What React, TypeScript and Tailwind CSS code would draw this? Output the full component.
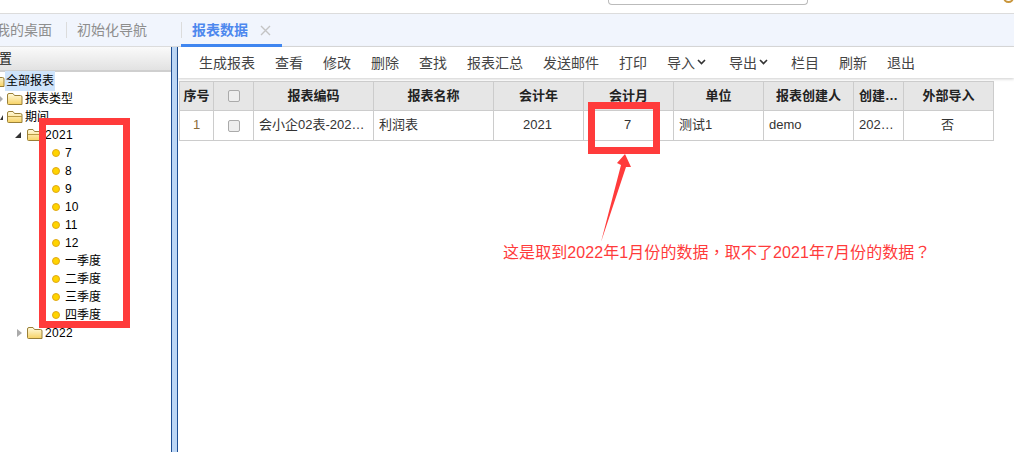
const months = ['7', '8', '9', '10', '11', '12', '一季度', '二季度', '三季度', '四季度'];

const columns = [
  { title: '序号', width: 'w-[34px]', value: '1', cell: 'text-center text-[#8a6d3b]' },
  { title: '', width: 'w-[40px]', value: '', cell: 'text-center', check: true },
  { title: '报表编码', width: 'w-[120px]', value: '会小企02表-202…', cell: 'pl-[5px] text-[#333]' },
  { title: '报表名称', width: 'w-[120px]', value: '利润表', cell: 'pl-[5px] text-[#333]' },
  { title: '会计年', width: 'w-[90px]', value: '2021', cell: 'pr-[2px] text-center text-[#333]' },
  { title: '会计月', width: 'w-[90px]', value: '7', cell: 'pr-[2px] text-center text-[#333]' },
  { title: '单位', width: 'w-[90px]', value: '测试1', cell: 'pl-[5px] text-[#333]' },
  { title: '报表创建人', width: 'w-[90px]', value: 'demo', cell: 'pl-[5px] text-[#333]' },
  { title: '创建…', width: 'w-[50px]', value: '202…', cell: 'pl-[5px] text-[#333]' },
  { title: '外部导入', width: 'w-[90px]', value: '否', cell: 'pr-[2px] text-center text-[#333]' },
];

const actions = [
  { label: '生成报表' },
  { label: '查看' },
  { label: '修改' },
  { label: '删除' },
  { label: '查找' },
  { label: '报表汇总' },
  { label: '发送邮件' },
  { label: '打印' },
  { label: '导入', caret: true },
  { label: '导出', caret: true },
  { label: '栏目' },
  { label: '刷新' },
  { label: '退出' },
];

function Folder({ open = false }: { open?: boolean }) {
  return (
    <svg width="16" height="14" viewBox="0 0 16 14" className="shrink-0">
      <defs>
        <linearGradient id="folderFill" x1="0" y1="0" x2="0" y2="1">
          <stop offset="0" stopColor="#fffbe0" />
          <stop offset="1" stopColor="#f7d264" />
        </linearGradient>
      </defs>
      <path d="M0.5 3 Q0.5 1.5 2 1.5 H6 L7.5 3.5 H13.5 Q15 3.5 15 5 V12.5 H1.5 Q0.5 12.5 0.5 11.5 Z" fill="url(#folderFill)" stroke="#9a8038" />
      {open && <path d="M1 6.5 H15" stroke="#b89a45" fill="none" />}
    </svg>
  );
}

function Dot() {
  return <span className="h-[8px] w-[8px] shrink-0 rounded-full border border-[#e0a818] bg-[#ffd400]" />;
}

function TreeLabel({ text, className = '' }: { text: string; className?: string }) {
  return <span className={`text-[12px] leading-[18px] text-black ${className}`}>{text}</span>;
}

function Caret() {
  return (
    <svg width="9" height="6" viewBox="0 0 9 6" className="mr-[3px] mb-[2px] ml-[2px]">
      <path d="M1 1 L4.5 4.5 L8 1" fill="none" stroke="#333" strokeWidth="1.6" />
    </svg>
  );
}

function Checkbox() {
  return <span className="inline-block h-[12px] w-[12px] rounded-[2px] border border-[#aaa] bg-[#eee] align-middle" />;
}

export default function App() {
  return (
    <div className="relative h-[452px] w-[1014px] overflow-hidden bg-white font-['Liberation_Sans','Noto_Sans_CJK_SC',sans-serif] text-[13px]">
      {/* top strip */}
      <div className="flex h-[14px] border-b border-[#dcdcdc] bg-white">
        <div className="ml-[608px] h-[5px] w-[200px] rounded-b-[4px] border border-t-0 border-[#bbb]" />
        <div className="mt-[-8px] ml-auto h-[11px] w-[11px] rounded-full border-2 border-[#c9963c]" />
      </div>

      {/* tabs */}
      <div className="flex h-[33px] items-center border-b border-[#dcdcdc] bg-[#f1f5fd]">
        <div className="ml-[-13px] flex h-[20px] w-[79px] items-center justify-end pr-[14px] text-[14px] whitespace-nowrap text-[#8e8e8e]">
          我的桌面
        </div>
        <div className="h-[16px] w-px bg-[#dcdcdc]" />
        <div className="w-[114px] pl-[10px] text-[14px] whitespace-nowrap text-[#8e8e8e]">初始化导航</div>
        <div className="h-[16px] w-px bg-[#dcdcdc]" />
        <div className="relative flex h-[33px] w-[100px] items-center pl-[10px] text-[14px] font-bold whitespace-nowrap text-[#4d88ee]">
          报表数据
          <svg width="11" height="11" viewBox="0 0 11 11" className="ml-[12px]">
            <path d="M1 1 L10 10 M10 1 L1 10" stroke="#c4c4c4" strokeWidth="1.4" />
          </svg>
          <span className="absolute right-0 bottom-0 left-[-1px] h-[3px] bg-[#3f86f0]" />
        </div>
      </div>

      <div className="flex h-[405px]">
        {/* tree */}
        <aside className="w-[171px] shrink-0">
          <div className="flex h-[25px] items-center border-b-2 border-[#cfcfcf] bg-gradient-to-b from-[#fafafa] to-[#e2e2e2] text-[13px] text-[#222]">
            <span className="ml-[-14px]">配置</span>
          </div>
          <div>
            <div className="flex h-[18px] items-center">
              <span className="-ml-[11px]"><Folder /></span>
              <span className="bg-[#cfe4fb] pr-px pl-px"><TreeLabel text="全部报表" /></span>
            </div>
            <div className="flex h-[18px] items-center pl-[7px]">
              <span className="absolute left-0 h-0 w-0 border-y-[3px] border-l-[3px] border-y-transparent border-l-[#aaa]" />
              <Folder />
              <TreeLabel text="报表类型" className="ml-[2px]" />
            </div>
            <div className="flex h-[18px] items-center pl-[7px]">
              <span className="absolute left-0 h-0 w-0 border-b-[5px] border-l-[3px] border-b-[#333] border-l-transparent" />
              <Folder open />
              <TreeLabel text="期间" className="ml-[2px]" />
            </div>
            <div className="flex h-[18px] items-center pl-[15px]">
              <span className="mr-[6px] h-0 w-0 border-b-[6px] border-l-[6px] border-b-[#333] border-l-transparent" />
              <Folder open />
              <TreeLabel text="2021" className="ml-[2px] tracking-[0.3px]" />
            </div>
            {months.map((m) => (
              <div key={m} className="flex h-[18px] items-center gap-[5px] pl-[52px]">
                <Dot />
                <TreeLabel text={m} />
              </div>
            ))}
            <div className="flex h-[18px] items-center pl-[17px]">
              <span className="mr-[5px] h-0 w-0 border-y-[4px] border-l-[5px] border-y-transparent border-l-[#aaa]" />
              <Folder />
              <TreeLabel text="2022" className="ml-[2px] tracking-[0.3px]" />
            </div>
          </div>
        </aside>

        {/* splitter */}
        <div className="h-full w-[7px] shrink-0 border-x border-[#1f4f94] bg-[#bcd6f5]" />

        {/* main panel */}
        <main className="min-w-0 flex-1">
          <div className="flex h-[31px] items-center gap-[20px] bg-white pt-px pl-[21px] text-[14px] text-[#444] shadow-[0_1px_3px_rgba(0,0,0,0.2)]">
            {actions.map((a) => (
              <div key={a.label} className="flex shrink-0 items-center whitespace-nowrap">
                {a.label}
                {a.caret && <Caret />}
              </div>
            ))}
          </div>

          <div className="mt-[3px] ml-px flex w-[815px] flex-col border-t border-l border-[#ccc]">
            <div className="flex h-[29px] bg-[#e6e6e6]">
              {columns.map((c, i) => (
                <div key={i} className={`${c.width} flex shrink-0 items-center justify-center border-r border-b border-[#ccc] text-[13px] font-bold text-[#222]`}>
                  {c.check ? <Checkbox /> : c.title}
                </div>
              ))}
            </div>
            <div className="flex h-[30px]">
              {columns.map((c, i) => (
                <div key={i} className={`${c.width} ${c.cell} shrink-0 border-r border-b border-[#ccc] text-[13px] leading-[28px] whitespace-nowrap`}>
                  {c.check ? <Checkbox /> : c.value}
                </div>
              ))}
            </div>
          </div>
        </main>
      </div>

      {/* red markup drawn over the screenshot */}
      <div className="pointer-events-none absolute top-[118px] left-[39px] h-[210px] w-[91px] border-[7px] border-[#ff3b3b]" />
      <div className="pointer-events-none absolute top-[102px] left-[588px] h-[52px] w-[72px] border-[7px] border-[#ff3b3b]" />
      <svg width="40" height="92" viewBox="0 0 40 92" className="pointer-events-none absolute top-[153px] left-[596px]">
        <path d="M29 1 L35 14 L30 14 L5 89 L25 12 L21 10 Z" fill="#ff3b3b" />
      </svg>
      <div className="absolute top-[241px] left-[503px] text-[16px] leading-[20px] tracking-[0.08px] whitespace-nowrap text-[#ff3b3b] [text-spacing-trim:space-all]">
        这是取到2022年1月份的数据<span className="font-['Noto_Sans_CJK_TC']">，</span>取不了2021年7月份的数据<span className="font-['Noto_Sans_CJK_TC']">？</span>
      </div>
    </div>
  );
}
